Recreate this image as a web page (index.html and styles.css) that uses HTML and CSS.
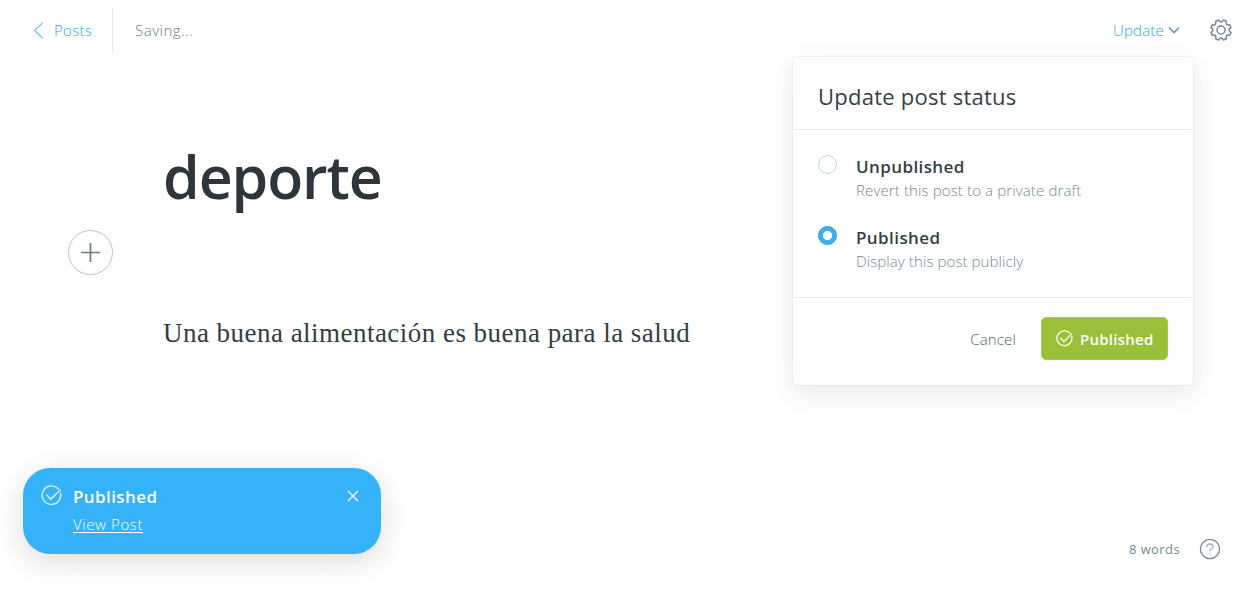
FILE: index.html
```html
<!DOCTYPE html>
<html lang="en">
<head>
<meta charset="utf-8">
<title>Editor</title>
<link rel="stylesheet" href="styles.css">
</head>
<body>
<div class="editor">
  <header class="topbar">
    <a class="back">
      <svg class="back-icon" width="11" height="18" viewBox="0 0 11 18"><path d="M9.5 2 L1.5 9.5 L9.5 17"/></svg>
      <span class="t-posts">Posts</span>
    </a>
    <span class="saving"><span class="t-saving">Saving...</span></span>
    <a class="update"><span class="t-update">Update</span>
      <svg class="chevron" width="12" height="8" viewBox="0 0 12 8"><path d="M1.3 1.7 L6 6.8 L10.7 1.7"/></svg>
    </a>
    <svg class="gear" width="22" height="22" viewBox="-11 -11 22 22"><path d="M-2.5 -10 Q0 -6 2.5 -10 L5.3 -8.8 Q4.25 -4.25 8.8 -5.3 L10 -2.5 Q6 0 10 2.5 L8.8 5.3 Q4.25 4.25 5.3 8.8 L2.5 10 Q0 6 -2.5 10 L-5.3 8.8 Q-4.25 4.25 -8.8 5.3 L-10 2.5 Q-6 0 -10 -2.5 L-8.8 -5.3 Q-4.25 -4.25 -5.3 -8.8 Z"/><circle r="4"/></svg>
  </header>

  <main class="content">
    <h1 class="title"><span class="t-title">deporte</span></h1>
    <button class="plus"><svg width="19" height="19" viewBox="0 0 19 19"><path d="M9.5 0V19M0 9.5H19"/></svg></button>
    <p class="body"><span class="t-body">Una buena alimentación es buena para la salud</span></p>
  </main>

  <footer class="status">
    <span class="t-words">8 words</span>
    <svg class="help" width="22" height="22" viewBox="0 0 22 22"><circle cx="11" cy="11" r="9.6"/><path class="help-mark" d="M7.8 8.6 Q8 6 11 6 Q14.2 6 14.2 8.6 Q14.2 10.3 12.2 11 Q11 11.5 11 13M11 15.6V16"/></svg>
  </footer>

  <section class="menu">
    <header class="menu-head"><span class="t-heading">Update post status</span></header>
    <div class="menu-body">
      <div class="option">
        <span class="radio"></span>
        <div><div class="label"><span class="t-unpub">Unpublished</span></div><div class="desc"><span class="t-revert">Revert this post to a private draft</span></div></div>
      </div>
      <div class="option">
        <span class="radio radio-on"></span>
        <div><div class="label"><span class="t-pub">Published</span></div><div class="desc desc-low"><span class="t-display">Display this post publicly</span></div></div>
      </div>
    </div>
    <footer class="menu-foot">
      <a class="cancel"><span class="t-cancel">Cancel</span></a>
      <button class="publish">
        <svg class="check" width="17" height="17" viewBox="0 0 22 22"><path d="M18 4 A9.7 9.7 0 1 0 20.4 8.5"/><path d="M6.2 10.8 L10.2 14.8 L20.2 5.2"/></svg>
        <span class="t-button">Published</span>
      </button>
    </footer>
  </section>

  <aside class="toast">
    <svg class="check toast-check" width="21" height="21" viewBox="0 0 22 22"><path d="M18 4 A9.7 9.7 0 1 0 20.4 8.5"/><path d="M6.2 10.8 L10.2 14.8 L20.2 5.2"/></svg>
    <div class="toast-text">
      <div class="toast-title"><span class="t-toast">Published</span></div>
      <a class="toast-link"><span class="t-view">View Post</span></a>
    </div>
    <svg class="close" width="12" height="12" viewBox="0 0 12 12"><path d="M1.3 1.3L10.7 10.7M10.7 1.3L1.3 10.7"/></svg>
  </aside>
</div>
</body>
</html>
```
FILE: styles.css
```css
* { box-sizing: border-box; }
body { margin: 0; background: #fff; font-family: "Open Sans", "Noto Sans", sans-serif; font-size: 15px; font-weight: 300; }
svg { display: block; flex: none; fill: none; stroke: currentColor; stroke-linecap: round; stroke-linejoin: round; }
button { border: 0; padding: 0; font: inherit; background: none; }
span { white-space: nowrap; }
.editor { position: relative; height: 589px; overflow: hidden; display: flex; flex-direction: column; }

.topbar { height: 60px; display: flex; align-items: center; padding: 0 18px 0 33px; flex: none; }
.back { display: flex; align-items: center; gap: 10px; width: 80px; height: 45px; border-right: 1px solid #dfecf5; color: #2ca6ea; }
.back-icon { color: #6cc2f3; stroke-width: 1.2; }
.saving { margin-left: 22px; color: #667f8a; }
.update { margin-left: auto; display: flex; align-items: center; color: #2ca6ea; gap: 4px; }
.chevron { color: #5f8fa8; stroke-width: 1.3; }
.gear { margin-left: 30px; color: #738a94; stroke-width: 1.5; }

.content { position: relative; flex: 1; padding: 76px 163px 0; }
.title { margin: 0; font-size: 59px; line-height: 80px; font-weight: 600; color: #2d363b; }
.plus { position: absolute; left: 68px; top: 170px; width: 45px; height: 45px; border: 1px solid #b3c6ce; border-radius: 50%; display: grid; place-items: center; color: #6d7d85; }
.plus svg { stroke-width: 1.7; stroke-linecap: butt; }
.body { margin: 97px 0 0; font: 27px/40px "Liberation Serif", serif; color: #333d42; }

.status { height: 80px; display: flex; justify-content: flex-end; align-items: center; padding: 0 29px 0 0; gap: 19px; color: #738a94; font-size: 13px; font-weight: 400; flex: none; }
.help { stroke-width: 1.3; }
.help-mark { stroke: #9fb0b8; }

.menu { position: absolute; left: 793px; top: 57px; width: 400px; height: 328px; border-radius: 5px; background: #fff; display: flex; flex-direction: column; box-shadow: 0 0 0 1px rgba(99,114,130,.06), 0 8px 26px rgba(40,60,70,.12); }
.menu-head { height: 73px; padding: 19px 25px 0; border-bottom: 1px solid #e3edf3; font-size: 22px; line-height: 40px; font-weight: 400; color: #343f44; }
.menu-body { height: 168px; padding: 25px; border-bottom: 1px solid #e3edf3; }
.option { display: flex; gap: 19px; height: 71px; }
.radio { width: 19px; height: 19px; flex: none; border-radius: 50%; border: 1px solid #bdd7e8; }
.radio-on { border: 1px solid #2b98d5; background: radial-gradient(circle, #fff 4.3px, #3eb0ef 5px); }
.label { font-size: 17px; line-height: 24px; font-weight: 600; color: #343f44; }
.desc { line-height: 22px; color: #738a94; }
.desc-low { line-height: 23px; }
.menu-foot { flex: 1; display: flex; align-items: flex-start; justify-content: flex-end; gap: 25px; padding: 19px 25px; }
.cancel { line-height: 45px; color: #50646d; }
.publish { width: 127px; height: 43px; border-radius: 5px; border: 1px solid #a9cc4b; background: #9abf38; color: #fff; display: flex; align-items: center; padding-left: 14px; gap: 7px; font-weight: 600; }
.check { stroke-width: 1.8; color: #f2f8df; }

.toast { position: absolute; left: 23px; top: 468px; width: 358px; height: 86px; border-radius: 27px; background: #35b2f9; color: #fff; display: flex; align-items: flex-start; padding: 17px 22px 0 18px; box-shadow: 0 8px 30px rgba(0,0,0,.14); }
.toast-check { color: #d5effe; stroke-width: 1.5; }
.toast-text { flex: 1; padding-left: 11px; }
.toast-title { font-size: 17px; line-height: 24px; font-weight: 600; }
.toast-link { display: block; line-height: 31px; font-weight: 300; text-decoration: underline; text-underline-offset: 2px; }
.close { margin-top: 5px; color: #e3f4fe; stroke-width: 1.5; }

.t-title { letter-spacing: -1.1px; }
.t-heading { letter-spacing: .24px; }
.t-body { letter-spacing: .47px; }
.t-posts { letter-spacing: .3px; }
.t-saving { letter-spacing: .5px; }
.t-update { letter-spacing: .2px; }
.t-unpub { letter-spacing: .4px; }
.t-pub { letter-spacing: .42px; }
.t-toast { letter-spacing: .4px; }
.t-revert { letter-spacing: .13px; }
.t-display { letter-spacing: .1px; }
.t-cancel { letter-spacing: .15px; }
.t-button { letter-spacing: .25px; }
.t-view { letter-spacing: .6px; }
.t-words { letter-spacing: .4px; }
```
